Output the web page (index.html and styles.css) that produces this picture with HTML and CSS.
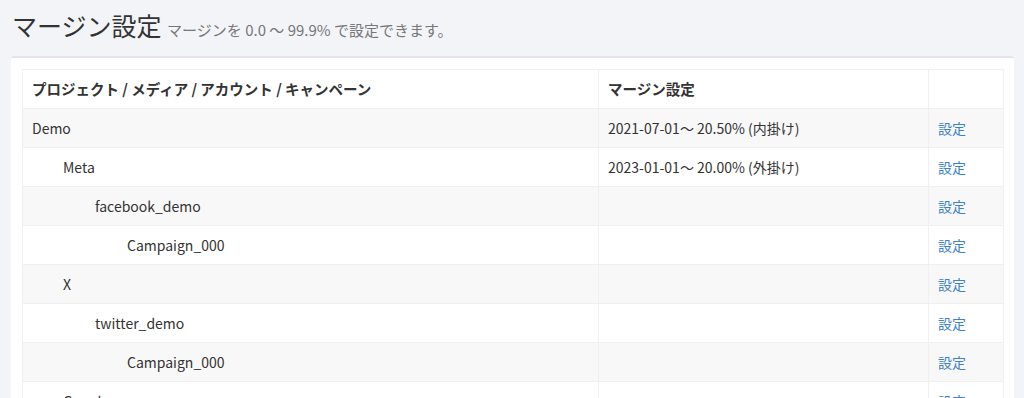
FILE: index.html
```html
<!DOCTYPE html>
<html lang="ja">
<head>
    <meta charset="UTF-8">
    <title>マージン設定</title>
    <link rel="stylesheet" href="styles.css">
</head>
<body>
    <div class="page-header">
        <h1>マージン設定 <small>マージンを 0.0 〜 99.9% で設定できます。</small></h1>
    </div>
    <div class="panel">
        <table class="margin-table">
            <thead>
                <tr>
                    <th class="col-name">プロジェクト / メディア / アカウント / キャンペーン</th>
                    <th class="col-margin">マージン設定</th>
                    <th class="col-action"></th>
                </tr>
            </thead>
            <tbody>
                <tr>
                    <td class="level-0">Demo</td>
                    <td>2021-07-01〜 20.50% (内掛け)</td>
                    <td><a href="#">設定</a></td>
                </tr>
                <tr>
                    <td class="level-1">Meta</td>
                    <td>2023-01-01〜 20.00% (外掛け)</td>
                    <td><a href="#">設定</a></td>
                </tr>
                <tr>
                    <td class="level-2">facebook_demo</td>
                    <td></td>
                    <td><a href="#">設定</a></td>
                </tr>
                <tr>
                    <td class="level-3">Campaign_000</td>
                    <td></td>
                    <td><a href="#">設定</a></td>
                </tr>
                <tr>
                    <td class="level-1">X</td>
                    <td></td>
                    <td><a href="#">設定</a></td>
                </tr>
                <tr>
                    <td class="level-2">twitter_demo</td>
                    <td></td>
                    <td><a href="#">設定</a></td>
                </tr>
                <tr>
                    <td class="level-3">Campaign_000</td>
                    <td></td>
                    <td><a href="#">設定</a></td>
                </tr>
                <tr>
                    <td class="level-1">Google</td>
                    <td></td>
                    <td><a href="#">設定</a></td>
                </tr>
                <tr>
                    <td class="level-2">google_demo</td>
                    <td></td>
                    <td><a href="#">設定</a></td>
                </tr>
            </tbody>
        </table>
    </div>
</body>
</html>
```

FILE: styles.css
```css
html, body {
    margin: 0;
    background-color: #f3f4f8;
    color: #333;
    font-family: "Noto Sans CJK JP", "Noto Sans", sans-serif;
    font-size: 14px;
}
.page-header {
    height: 56px;
    padding: 0 12px;
    box-sizing: border-box;
}
.page-header h1 {
    margin: 0;
    padding-top: 8px;
    font-size: 25px;
    font-weight: normal;
    line-height: 34px;
    color: #333;
}
.page-header small {
    font-size: 15px;
    color: #777;
}
.panel {
    margin: 0 10px 0 11px;
    padding: 11px 10px 20px 11px;
    background-color: white;
    border-top: 2px solid #e3e5ee; /* Slightly darker top edge */
    border-radius: 3px;
}
.margin-table {
    width: 100%;
    border-collapse: collapse;
    border: 1px solid #efefef;
}
.margin-table th, .margin-table td {
    padding: 9px 9px;
    line-height: 20px;
    text-align: left;
    border: 1px solid #f0f0f0;
}
.margin-table th {
    font-size: 14.5px;
    font-weight: bold;
}
.col-name {
    width: 557px;
}
.col-margin {
    width: 311px;
}
.margin-table tbody tr:nth-child(odd) {
    background-color: #f8f8f8;
}
.margin-table td.level-1 {
    padding-left: 40px;
}
.margin-table td.level-2 {
    padding-left: 72px;
}
.margin-table td.level-3 {
    padding-left: 104px;
}
.margin-table a {
    color: #3d82c4;
    text-decoration: none;
}
```
